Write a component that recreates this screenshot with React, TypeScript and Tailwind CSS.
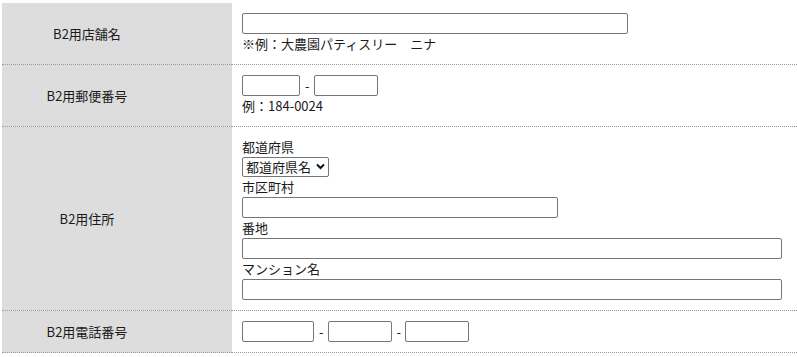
import React from 'react';

const font = { fontFamily: '"Noto Sans CJK JP", "Noto Sans", sans-serif' };

const inputCls = 'block h-[21px] border border-[#767676] rounded-[2px] bg-white px-1 text-[13px] outline-none';

function Dash() {
  return <span className="ml-[5px] mr-[4px] text-[13px] leading-[21px]">-</span>;
}

function Row({ label, children }: { label: string; children: React.ReactNode }) {
  return (
    <tr className="border-b border-dotted border-[#999]">
      <th className="w-[230px] bg-[#dddddd] pr-[60px] text-center align-middle font-normal text-[13px]">{label}</th>
      <td className="px-[10px] py-[10px] align-top">{children}</td>
    </tr>
  );
}

export default function App() {
  return (
    <div className="bg-white min-h-[357px] pt-[3px] pl-[2px] text-[#1a1a1a]" style={font}>
      <table className="w-[795px] border-collapse text-[13px] leading-[20px]">
        <tbody>
          <Row label="B2用店舗名">
            <input className={inputCls + ' w-[386px]'} />
            <div>※例：大農園パティスリー　ニナ</div>
          </Row>
          <Row label="B2用郵便番号">
            <div className="flex items-center">
              <input className={inputCls + ' w-[58px]'} />
              <Dash />
              <input className={inputCls + ' w-[64px]'} />
            </div>
            <div>例：184-0024</div>
          </Row>
          <Row label="B2用住所">
            <div>都道府県</div>
            <div className="relative inline-block align-top">
              <select
                className="block h-[20px] w-[87px] appearance-none border border-[#767676] rounded-[2px] bg-white pl-[3px] text-[13px] leading-[18px] text-[#1a1a1a] outline-none"
                defaultValue=""
              >
                <option value="">都道府県名</option>
              </select>
              <svg
                className="pointer-events-none absolute right-[4px] top-[6px]"
                width="9"
                height="7"
                viewBox="0 0 9 7"
              >
                <path d="M1 1.5 L4.5 5 L8 1.5" fill="none" stroke="#111" strokeWidth="2" />
              </svg>
            </div>
            <div>市区町村</div>
            <input className={inputCls + ' w-[316px]'} />
            <div>番地</div>
            <input className={inputCls + ' w-[540px]'} />
            <div>マンション名</div>
            <input className={inputCls + ' w-[540px]'} />
          </Row>
          <Row label="B2用電話番号">
            <div className="flex items-center">
              <input className={inputCls + ' w-[72px]'} />
              <Dash />
              <input className={inputCls + ' w-[64px]'} />
              <Dash />
              <input className={inputCls + ' w-[64px]'} />
            </div>
          </Row>
        </tbody>
      </table>
    </div>
  );
}
